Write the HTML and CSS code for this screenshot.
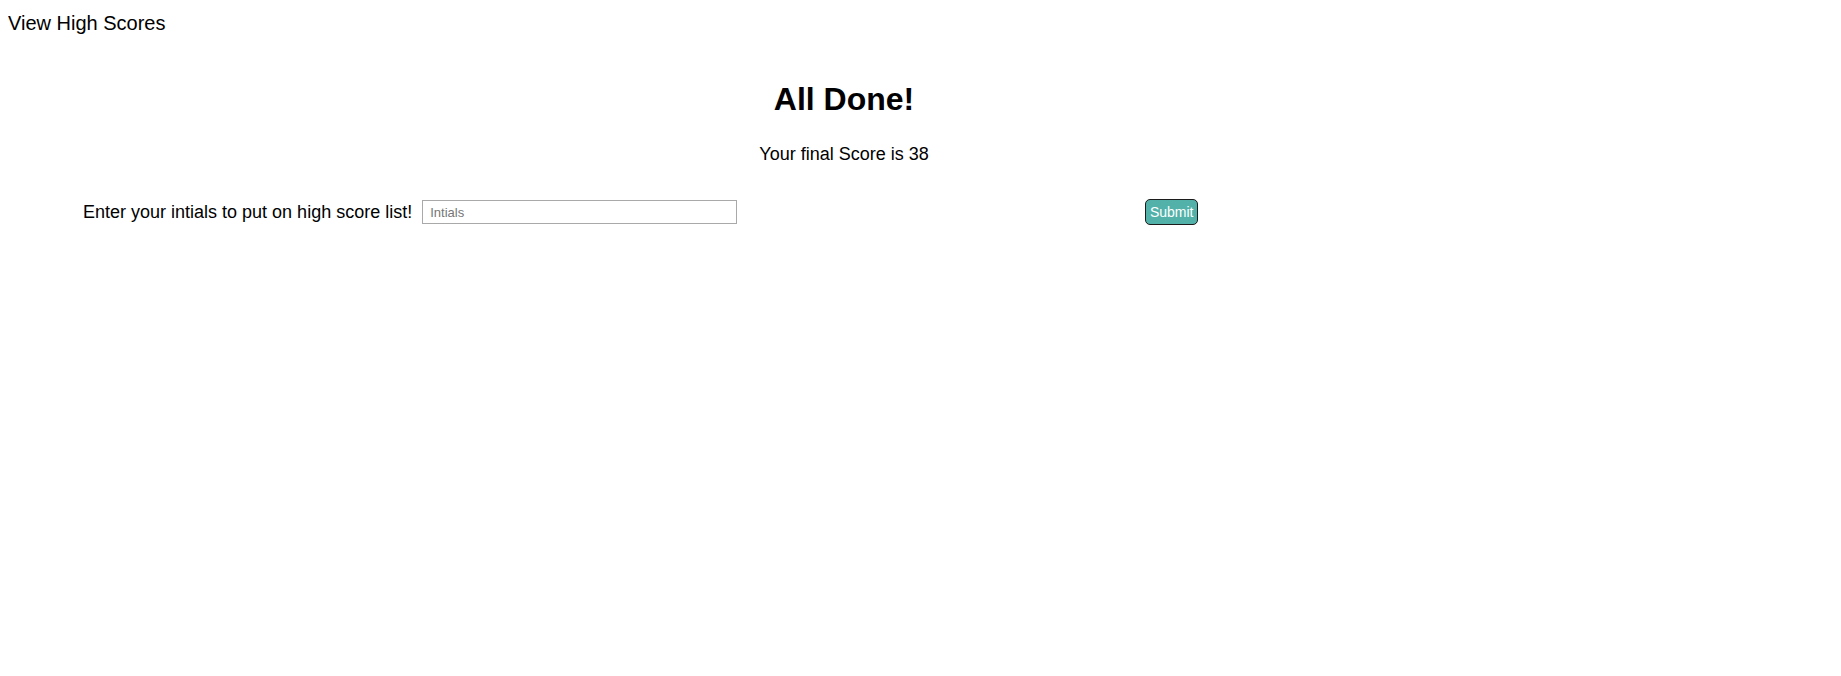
FILE: index.html
```html
<!DOCTYPE html>
<html lang="en">
<head>
<meta charset="utf-8">
<title>Quiz</title>
<link rel="stylesheet" href="styles.css">
</head>
<body>
<header class="topbar">
  <a class="scores-link">View High Scores</a>
</header>
<main class="main">
  <h1 class="title">All Done!</h1>
  <p class="final">Your final Score is 38</p>
  <form class="entry">
    <label class="entry-label" for="initials">Enter your intials to put on high score list!</label>
    <input class="entry-input" id="initials" type="text" placeholder="Intials">
    <button class="entry-btn" type="button">Submit</button>
  </form>
</main>
</body>
</html>
```
FILE: styles.css
```css
html, body {
  background: #ffffff;
}
body {
  margin: 8px;
  font-family: "Liberation Sans", Arial, sans-serif;
  color: #000;
}
.topbar {
  padding-top: 4px;
  font-size: 20px;
  line-height: 23px;
}
.scores-link {
  color: #000;
  text-decoration: none;
  cursor: pointer;
}
.main {
  width: 1672px;
  padding-top: 46px;
}
.title {
  margin: 0;
  text-align: center;
  font-size: 32px;
  line-height: 37px;
  font-weight: bold;
}
.final {
  margin: 26px 0 0;
  text-align: center;
  font-size: 18px;
  line-height: 21px;
}
.entry {
  display: flex;
  align-items: center;
  margin-top: 34px;
  padding-left: 75px;
}
.entry-label {
  font-size: 18px;
  line-height: 21px;
}
.entry-input {
  margin-left: 10px;
  box-sizing: border-box;
  width: 315px;
  height: 24px;
  border: 1px solid #a9a9a9;
  padding: 0 7px;
  font-family: "Liberation Sans", Arial, sans-serif;
  font-size: 13px;
  outline: none;
}
.entry-input::placeholder {
  color: #767676;
}
.entry-btn {
  margin-left: 408px;
  box-sizing: border-box;
  width: 53px;
  height: 26px;
  padding: 0;
  border: 1px solid #1c1c1c;
  border-radius: 5px;
  background: #52b1a9;
  color: #fff;
  font-family: "Liberation Sans", Arial, sans-serif;
  font-size: 14px;
  font-weight: normal;
}
```
